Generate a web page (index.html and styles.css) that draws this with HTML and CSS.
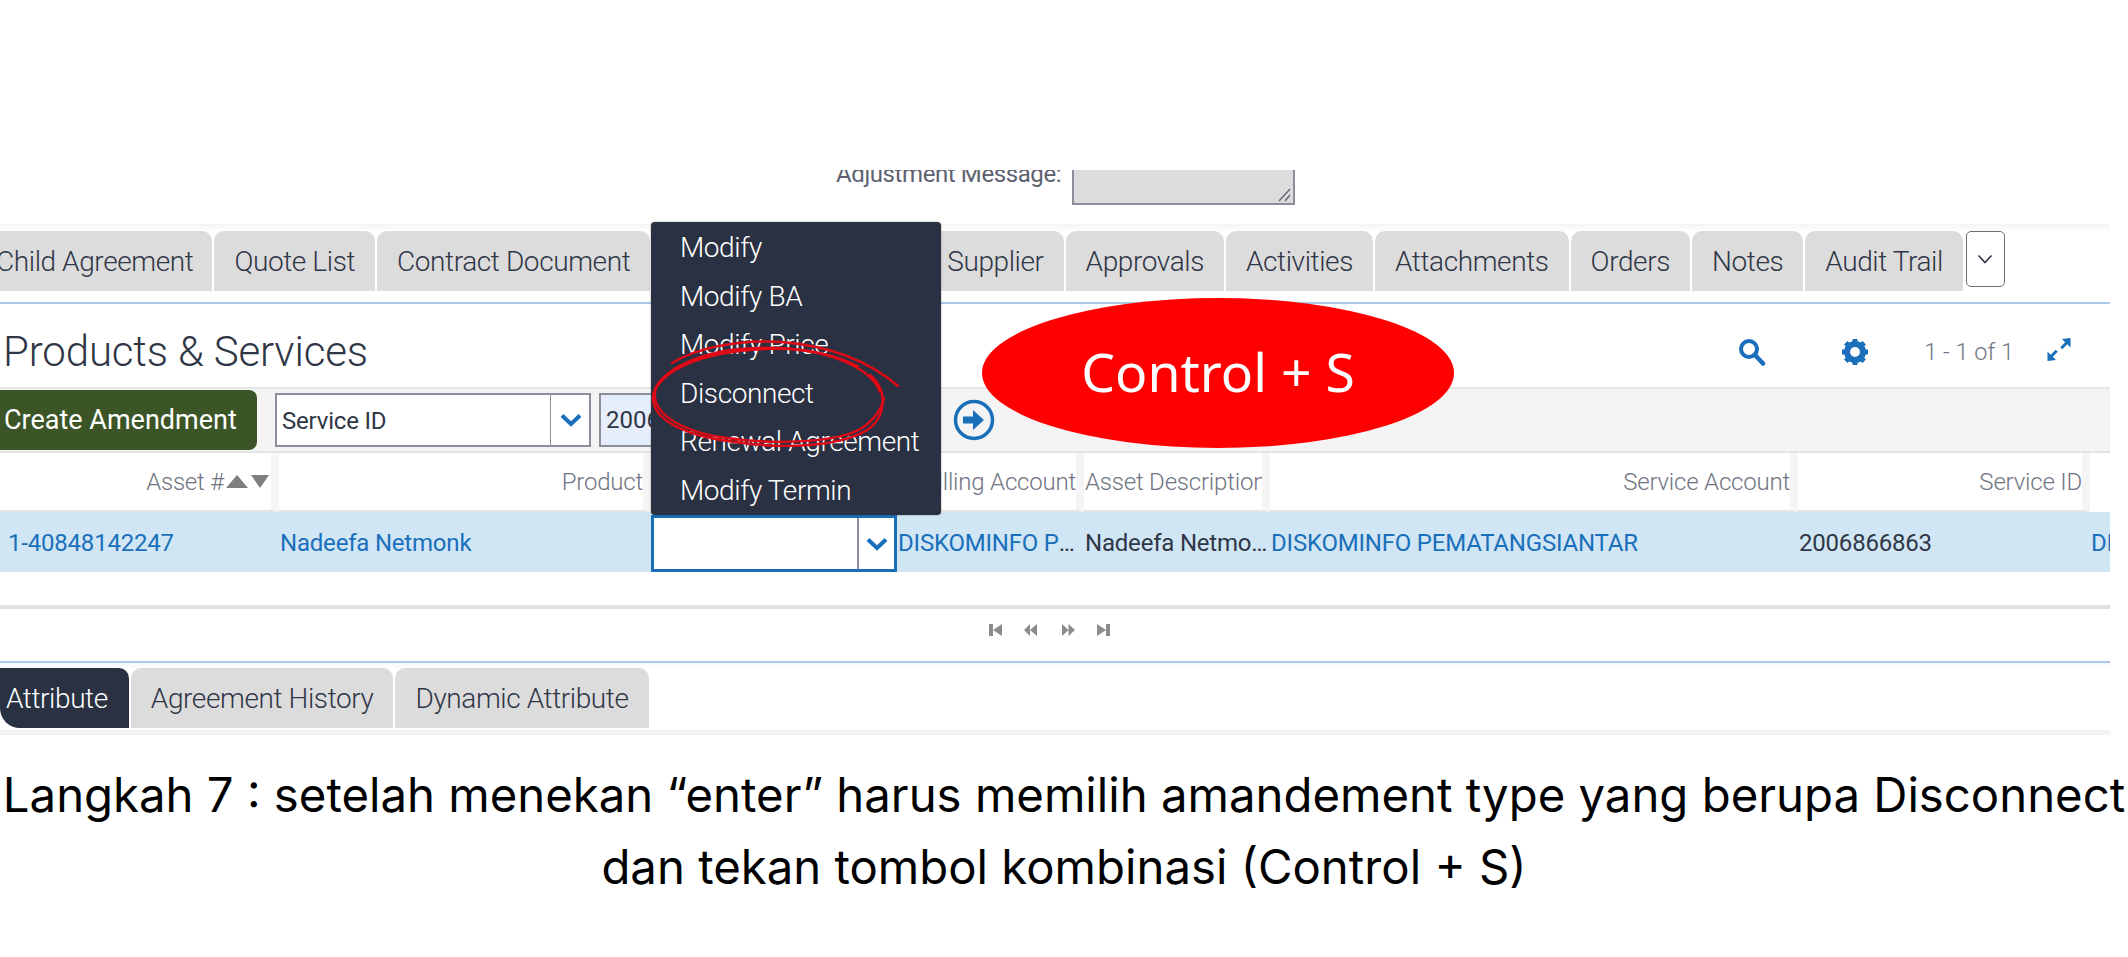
FILE: index.html
```html
<!DOCTYPE html>
<html lang="en">
<head>
    <meta charset="UTF-8">
    <meta name="viewport" content="width=device-width, initial-scale=1.0">
    <title>Langkah 7</title>
    <link rel="stylesheet" href="styles.css">
</head>
<body>
    <div class="shot">
        <div class="adjust">
            <span class="adjust-label">Adjustment Message:</span>
            <div class="adjust-box">
                <svg class="grip" width="14" height="14" viewBox="0 0 14 14"><path d="M1 13 12 1M7 13 12 7" stroke="#666b75" stroke-width="1.5" fill="none"/></svg>
            </div>
        </div>

        <div class="tabs">
            <div class="tab first-tab">Child Agreement</div>
            <div class="tab">Quote List</div>
            <div class="tab">Contract Document</div>
            <div class="tab hidden-tab"></div>
            <div class="tab">Supplier</div>
            <div class="tab">Approvals</div>
            <div class="tab">Activities</div>
            <div class="tab">Attachments</div>
            <div class="tab">Orders</div>
            <div class="tab">Notes</div>
            <div class="tab">Audit Trail</div>
            <div class="more-btn">
                <svg width="16" height="10" viewBox="0 0 16 10"><path d="M1.5 1.5 8 8.500l6.500-7" stroke="#2f3646" stroke-width="1.6" fill="none"/></svg>
            </div>
        </div>

        <div class="title-bar">
            <h2>Products &amp; Services</h2>
            <div class="title-tools">
                <svg class="search-icon" width="28" height="28" viewBox="0 0 28 28"><circle cx="11" cy="11" r="8" fill="none" stroke="#1a6fbb" stroke-width="4"/><path d="M17 17 25 25.500" stroke="#1a6fbb" stroke-width="4.500" stroke-linecap="round"/></svg>
                <svg class="gear-icon" width="28" height="28" viewBox="0 0 28 28"><circle cx="14" cy="14" r="8" fill="none" stroke="#1a6fbb" stroke-width="6"/><path d="M14 1v26M1 14h26M4.800 4.800l18.400 18.400M23.200 4.800 4.800 23.200" stroke="#1a6fbb" stroke-width="5" stroke-dasharray="5.500 15 5.500"/></svg>
                <span class="count">1 - 1 of 1</span>
                <svg class="expand-icon" width="24" height="25" viewBox="0 0 24 25"><path d="M23.500 1v9.500l-3.200-3.200-5 5-2.100-2.100 5-5L15 2zM.5 24v-9.500l3.200 3.200 5-5 2.100 2.100-5 5 3.200 3.200z" fill="#1a6fbb"/></svg>
            </div>
        </div>

        <div class="toolbar">
            <button class="create-btn">Create Amendment</button>
            <div class="picker">
                <span class="picker-text">Service ID</span>
                <span class="picker-arrow"><svg width="22" height="14" viewBox="0 0 22 14"><path d="M2 2.500 11 11l9-8.500" stroke="#1a6fbb" stroke-width="4" fill="none"/></svg></span>
            </div>
            <div class="search-val">2006866863</div>
            <svg class="go-icon" width="42" height="42" viewBox="0 0 42 42"><circle cx="21" cy="21" r="18.500" fill="#f4f4f4" stroke="#1a6fbb" stroke-width="3.500"/><path d="M10 17.500h10V11l11 10-11 10v-6.500H10z" fill="#1a6fbb"/></svg>
        </div>

        <div class="grid head-row">
            <div class="hcell">Asset #<span class="sort"><i class="up"></i><i class="down"></i></span></div>
            <div class="hcell">Product</div>
            <div class="hcell"></div>
            <div class="hcell">Billing Account</div>
            <div class="hcell left">Asset Description</div>
            <div class="hcell">Service Account</div>
            <div class="hcell">Service ID</div>
            <div></div>
        </div>

        <div class="grid data-row">
            <div class="cell first-cell"><a>1-40848142247</a></div>
            <div class="cell"><a>Nadeefa Netmonk</a></div>
            <div class="row-select">
                <span class="row-select-arrow"><svg width="22" height="14" viewBox="0 0 22 14"><path d="M2 2.500 11 11l9-8.500" stroke="#1a6fbb" stroke-width="4" fill="none"/></svg></span>
            </div>
            <div class="cell flush"><a>DISKOMINFO PEMATANGSIANTAR</a></div>
            <div class="cell wide-desc">Nadeefa Netmonk</div>
            <div class="cell"><a>DISKOMINFO PEMATANGSIANTAR</a></div>
            <div class="cell">2006866863</div>
            <div class="cell clip"><a>DISKOMINFO</a></div>
        </div>

        <div class="pager">
            <svg width="122" height="14" viewBox="0 0 122 14" fill="#8c8c8c">
                <path d="M0 1h4v12H0zM13 1v12L4 7zM41 1v12l-6-6zM48 1v12l-7-6zM73 1l6.500 6-6.500 6zM79.500 1l6.500 6-6.500 6zM108 1l9 6-9 6zM117 1h4v12h-4z"/>
            </svg>
        </div>

        <div class="subtabs">
            <div class="subtab active">Attribute</div>
            <div class="subtab">Agreement History</div>
            <div class="subtab">Dynamic Attribute</div>
        </div>

        <ul class="menu">
            <li>Modify</li>
            <li>Modify BA</li>
            <li>Modify Price</li>
            <li>Disconnect</li>
            <li>Renewal Agreement</li>
            <li>Modify Termin</li>
        </ul>

        <svg class="scribble" width="270" height="125" viewBox="640 330 270 125" fill="none" stroke="#e00a16" stroke-width="2.400" stroke-linecap="round">
            <path d="M898 386C870 362 830 346 782 342 735 339 695 349 672 363"/>
            <path d="M858 366C825 350 780 345 740 349 690 354 655 375 653 397 652 420 685 437 743 443 790 449 845 446 870 428 886 415 888 390 870 375"/>
            <path d="M880 392C872 370 835 352 790 349 735 347 675 358 656 388 648 412 680 430 720 437 775 446 840 442 862 428 876 418 882 408 884 398"/>
        </svg>

        <div class="badge">Control + S</div>
    </div>

    <p class="caption">Langkah 7 : setelah menekan “enter” harus memilih amandement type yang berupa Disconnect<br>dan tekan tombol kombinasi (Control + S)</p>
</body>
</html>
```

FILE: styles.css
```css
body {
    margin: 0;
    background-color: #fff;
    font-family: Roboto, "Liberation Sans", sans-serif;
    color: #2f3646;
    height: 957px;
    overflow: hidden;
}
.shot {
    position: relative;
    width: 2110px;
    height: 565px;
    margin-top: 170px;
    overflow: hidden;
}

/* clipped field on top */
.adjust {
    display: flex;
    height: 54px;
    padding-left: 836px;
    gap: 12px;
    background-color: #fff;
}
.adjust-label {
    font-size: 24px;
    line-height: 28px;
    letter-spacing: -0.4px;
    margin-top: -10px;
    color: #5c6270;
    width: 224px;
    white-space: nowrap;
}
.adjust-box {
    position: relative;
    width: 219px;
    height: 33px;
    background-color: #dcdcdc;
    border: 2px solid #8a8f9b;
    border-top: none;
}
.grip {
    position: absolute;
    right: 1px;
    bottom: 1px;
}

/* tabs */
.tabs {
    display: flex;
    gap: 2px;
    height: 80px;
    box-sizing: border-box;
    padding-top: 7px;
    background: linear-gradient(#f5f5f5 0, #fff 8px);
    border-bottom: 2px solid #a9c8e8;
    margin-left: -24px;
    padding-left: 0;
    width: 2134px;
}
.tab {
    height: 60px;
    line-height: 62px;
    padding: 0 20px;
    background-color: #dcdcdc;
    border-radius: 10px 10px 0 0;
    font-size: 28px;
    font-weight: 300;
    letter-spacing: -0.4px;
    color: #2f3646;
    white-space: nowrap;
}
.first-tab {
    padding-right: 19px;
}
.hidden-tab {
    width: 0;
    flex: 0 0 273px;
    padding: 0;
}
.more-btn {
    display: flex;
    align-items: center;
    justify-content: center;
    width: 39px;
    height: 56px;
    margin-left: 1px;
    box-sizing: border-box;
    border: 1px solid #6b6f78;
    border-radius: 5px;
    background-color: #fff;
}

/* title */
.title-bar {
    display: flex;
    justify-content: space-between;
    height: 83px;
    background-color: #fff;
}
.title-bar h2 {
    margin: 0;
    padding: 18px 0 0 3px;
    font-size: 42px;
    line-height: 60px;
    font-weight: 300;
    letter-spacing: -0.15px;
    color: #2f3646;
}
.title-tools {
    display: flex;
    align-items: center;
    height: 96px;
}
.search-icon { margin-right: 75px; }
.gear-icon { margin-right: 55px; }
.count {
    font-size: 23.500px;
    font-weight: 300;
    color: #6f7482;
    margin-right: 33px;
}
.expand-icon { margin-right: 39px; margin-top: -6px; }

/* toolbar */
.toolbar {
    display: flex;
    align-items: center;
    height: 66px;
    box-sizing: border-box;
    border-top: 2px solid #e8e8e8;
    border-bottom: 2px solid #e4e4e4;
    background-color: #f4f4f4;
}
.create-btn {
    width: 257px;
    height: 60px;
    padding: 0 0 0 4px;
    text-align: left;
    border: none;
    border-radius: 0 8px 8px 0;
    background-color: #3c5526;
    color: #fff;
    font-family: Roboto, sans-serif;
    font-size: 27px;
}
.picker {
    display: flex;
    width: 316px;
    height: 54px;
    margin-left: 18px;
    box-sizing: border-box;
    border: 2px solid #8a8f9b;
    background-color: #fff;
}
.picker-text {
    flex: 1;
    padding-left: 5px;
    line-height: 52px;
    font-size: 24px;
    letter-spacing: -0.2px;
    color: #2f3646;
}
.picker-arrow {
    display: flex;
    align-items: center;
    justify-content: center;
    width: 39px;
    padding-left: 2px;
    box-sizing: border-box;
    border-left: 1px solid #8a8f9b;
}
.search-val {
    width: 300px;
    height: 54px;
    margin-left: 8px;
    padding-left: 5px;
    box-sizing: border-box;
    border: 2px solid #8a8f9b;
    background-color: #e6eefb;
    font-size: 24px;
    line-height: 50px;
    flex-shrink: 0;
}
.go-icon {
    flex-shrink: 0;
    margin-left: 54px;
}

/* table */
.grid {
    display: grid;
    grid-template-columns: 279px 372px 247px 186px 186px 528px 292px 20px;
}
.head-row {
    height: 59px;
    background-color: #fff;
}
.hcell {
    box-sizing: border-box;
    border-right: 8px solid #f5f5f5;
    border-bottom: 2px solid #e4e4e4;
    font-size: 24px;
    font-weight: 300;
    letter-spacing: -0.2px;
    line-height: 59px;
    color: #6f7482;
    text-align: right;
    white-space: nowrap;
    overflow: hidden;
    display: flex;
    justify-content: flex-end;
}
.hcell.left {
    justify-content: flex-start;
    padding-left: 1px;
}
.sort {
    display: inline-flex;
    align-items: center;
    gap: 3px;
    margin: 0 2px 0 2px;
}
.sort i {
    display: block;
    width: 0;
    height: 0;
    border-left: 11px solid transparent;
    border-right: 11px solid transparent;
}
.sort .up { border-bottom: 13px solid #7f7f7f; }
.sort .down { border-top: 13px solid #7f7f7f; width: 0; border-left-width: 9px; border-right-width: 9px; }
.data-row {
    height: 60px;
    background-color: #d0e6f4;
}
.cell {
    padding: 0 4px 0 1px;
    font-size: 24px;
    letter-spacing: -0.2px;
    line-height: 63px;
    color: #2f3646;
    white-space: nowrap;
    overflow: hidden;
    text-overflow: ellipsis;
}
.cell a { color: #1a6fbb; }
.first-cell { padding-left: 8px; }
.flush { padding-left: 0; }
.wide-desc { padding-right: 0; }
.clip { padding-right: 0; text-overflow: clip; }
.row-select {
    display: flex;
    justify-content: flex-end;
    width: 246px;
    height: 57px;
    margin-top: 3px;
    box-sizing: border-box;
    border: 3px solid #1a6fbb;
    background-color: #fff;
}
.row-select-arrow {
    display: flex;
    align-items: center;
    justify-content: center;
    width: 37px;
    padding-left: 1px;
    box-sizing: border-box;
    border-left: 2px solid #8a8f9b;
}

/* pager */
.pager {
    display: flex;
    align-items: center;
    justify-content: center;
    height: 58px;
    margin-top: 33px;
    padding-bottom: 10px;
    box-sizing: border-box;
    border-top: 4px solid #e0e0e0;
    border-bottom: 2px solid #a9c8e8;
}
.pager svg { margin-right: 11px; }

/* bottom tabs */
.subtabs {
    display: flex;
    gap: 2px;
    height: 72px;
    box-sizing: border-box;
    padding-top: 5px;
    border-bottom: 5px solid #f3f3f3;
    background: linear-gradient(#f3f7fc 0, #fff 6px);
}
.subtab {
    height: 60px;
    line-height: 62px;
    padding: 0 20px;
    font-size: 28px;
    font-weight: 300;
    letter-spacing: -0.4px;
    background-color: #dcdcdc;
    border-radius: 10px 10px 0 0;
    white-space: nowrap;
}
.subtab.active {
    padding: 0 21px 0 6px;
    background-color: #2a3142;
    color: #fff;
    border-radius: 0 10px 0 20px;
}

/* overlays */
.menu {
    position: absolute;
    left: 651px;
    top: 52px;
    width: 290px;
    margin: 0;
    padding: 1px 0 0;
    list-style: none;
    background-color: #2a3142;
    border-radius: 4px;
    box-shadow: 0 0 2px rgba(0, 0, 0, 0.4);
}
.menu li {
    height: 48.600px;
    padding-left: 29px;
    line-height: 50px;
    font-size: 28px;
    font-weight: 300;
    letter-spacing: -0.4px;
    color: #fff;
    white-space: nowrap;
}
.scribble {
    position: absolute;
    left: 640px;
    top: 160px;
}
.badge {
    position: absolute;
    left: 982px;
    top: 128px;
    width: 472px;
    height: 150px;
    border-radius: 50%;
    background-color: #f00;
    color: #fff;
    font-family: "Noto Sans", sans-serif;
    font-size: 53.500px;
    line-height: 148px;
    text-align: center;
}

.caption {
    margin: 24px 0 0;
    font-family: Inter, "Liberation Sans", sans-serif;
    font-size: 47.300px;
    line-height: 72px;
    color: #000;
    text-align: center;
    white-space: nowrap;
}
```
